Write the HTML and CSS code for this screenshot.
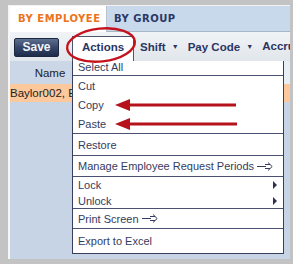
FILE: index.html
```html
<!DOCTYPE html>
<html>
<head>
<meta charset="utf-8">
<link rel="stylesheet" href="styles.css">
</head>
<body>
<div class="frame">
  <div class="tabs">
    <div class="tab tab-active">BY EMPLOYEE</div>
    <div class="tab tab-idle">BY GROUP</div>
  </div>
  <div class="toolbar">
    <div class="btn-save">Save</div>
    <div class="tb-actions">Actions</div>
    <div class="tb-item">Shift <span class="caret">▼</span></div>
    <div class="tb-item">Pay Code <span class="caret">▼</span></div>
    <div class="tb-item">Accruals</div>
  </div>
  <div class="grid">
    <div class="grid-head">
      <div class="col-name">Name</div>
      <div class="col-rest"></div>
    </div>
    <div class="grid-row">
      <div class="col-name cell">Baylor002, Ed</div>
    </div>
  </div>
  <div class="menu">
    <div class="grp"><div class="it h14 top">Select All</div></div>
    <div class="grp">
      <div class="it h19">Cut</div>
      <div class="it h19">Copy</div>
      <div class="it h19">Paste</div>
    </div>
    <div class="grp"><div class="it h21">Restore</div></div>
    <div class="grp"><div class="it h20">Manage Employee Request Periods <svg class="dbl" width="16" height="9" viewBox="0 0 16 9"><path d="M0 4.5H9M8 2.5H13M8 6.5H13M11 0.5L15.2 4.5L11 8.5" fill="none" stroke="#363b5e" stroke-width="1"/></svg></div></div>
    <div class="grp">
      <div class="it h16 sub">Lock <span class="tri"></span></div>
      <div class="it h15 sub">Unlock <span class="tri"></span></div>
    </div>
    <div class="grp"><div class="it h19">Print Screen <svg class="dbl" width="16" height="9" viewBox="0 0 16 9"><path d="M0 4.5H9M8 2.5H13M8 6.5H13M11 0.5L15.2 4.5L11 8.5" fill="none" stroke="#363b5e" stroke-width="1"/></svg></div></div>
    <div class="grp last"><div class="it h23">Export to Excel</div></div>
  </div>
</div>
<svg class="marks" width="293" height="264" viewBox="0 0 293 264">
  <ellipse cx="101" cy="45" rx="34" ry="16.5" transform="rotate(-6 101 45)" fill="none" stroke="#c4131d" stroke-width="2.4"/>
  <polygon points="115,105 130,99 130,111" fill="#b5121b"/>
  <rect x="128" y="103.5" width="108" height="3" fill="#b5121b"/>
  <polygon points="115,124 130,118 130,130" fill="#b5121b"/>
  <rect x="128" y="122.5" width="109" height="3" fill="#b5121b"/>
</svg>
</body>
</html>
```
FILE: styles.css
```css
html, body {
  margin: 0;
  padding: 0;
}
body {
  background: #c3c3c3;
  width: 293px;
  height: 264px;
  position: relative;
  overflow: hidden;
  font-family: "Liberation Sans", Arial, sans-serif;
}
.frame {
  position: absolute;
  left: 8px;
  top: 5px;
  width: 280px;
  height: 253px;
  border-left: 2px solid #f6f6f6;
  border-top: 1px solid #f2f2f2;
  background: #c6d4e6;
  display: flex;
  flex-direction: column;
}
.tabs {
  display: flex;
  height: 26px;
  flex: none;
}
.tab {
  font-family: "DejaVu Sans", Verdana, sans-serif;
  font-weight: bold;
  font-size: 10px;
  letter-spacing: 0.5px;
  line-height: 26px;
  box-sizing: border-box;
}
.tab-active {
  width: 97px;
  background: #fff;
  color: #ec7320;
  padding-left: 8px;
  border-right: 1px solid #b9c3d0;
}
.tab-idle {
  flex: 1;
  background: #c7d9eb;
  color: #2b3766;
  padding-left: 7px;
  border-bottom: 1px solid #a9b6c6;
}
.toolbar {
  flex: none;
  height: 28px;
  display: flex;
  align-items: flex-start;
  background: linear-gradient(#f1f3f6, #e1e6ec);
  overflow: hidden;
  padding-bottom: 1px;
  margin-bottom: -1px;
  white-space: nowrap;
  position: relative;
  z-index: 3;
}
.toolbar > div {
  flex: none;
}
.btn-save {
  margin: 6px 0 0 4px;
  width: 45px;
  height: 19px;
  box-sizing: border-box;
  border: 1px solid #1b2640;
  border-radius: 2px;
  background: linear-gradient(#5e6f8f, #34466a 50%, #1f2c4a);
  color: #f4f6fa;
  font-weight: bold;
  font-size: 12px;
  line-height: 17px;
  text-align: center;
}
.tb-actions {
  margin: 4px 0 0 13px;
  width: 62px;
  height: 25px;
  box-sizing: border-box;
  border: 1px solid #4e556e;
  border-bottom: none;
  background: #fff;
  color: #2a3562;
  font-weight: bold;
  font-size: 11.5px;
  line-height: 21px;
  text-align: center;
}
.tb-item {
  margin: 4px 0 0 6px;
  color: #2a3562;
  font-weight: bold;
  font-size: 11.5px;
  line-height: 21px;
  margin-right: 3px;
}
.caret {
  font-size: 7px;
  vertical-align: 2px;
  margin-left: 3px;
}
.grid {
  flex: 1;
  display: flex;
  flex-direction: column;
}
.grid-head {
  display: flex;
  height: 24px;
}
.col-name {
  width: 80px;
  text-align: center;
  font-size: 11.5px;
  line-height: 26px;
  color: #222;
  background: #cbd7e7;
}
.col-rest {
  flex: 1;
  background: #e8eef6;
}
.grid-row {
  height: 18px;
  background: #fcc89c;
}
.cell {
  text-align: left;
  line-height: 18px;
  background: transparent;
  white-space: nowrap;
  overflow: hidden;
}
.menu {
  position: absolute;
  left: 62px;
  top: 54px;
  width: 212px;
  height: 194px;
  box-sizing: border-box;
  border: 1px solid #383e5e;
  background: #fff;
  z-index: 2;
  color: #363b5e;
  font-size: 11px;
  white-space: nowrap;
}
.grp {
  border-bottom: 1px solid #4a5070;
}
.grp.last {
  border-bottom: none;
}
.it {
  padding-left: 5px;
  padding-right: 6px;
  display: flex;
  align-items: center;
  gap: 3px;
}
.it.top {
  align-items: flex-start;
  line-height: 12px;
}
.h14 { height: 14px; }
.h15 { height: 15px; }
.h16 { height: 16px; }
.h19 { height: 19px; }
.h20 { height: 20px; }
.h21 { height: 21px; }
.h23 { height: 23px; }
.sub {
  justify-content: space-between;
}
.tri {
  width: 0;
  height: 0;
  border-top: 4px solid transparent;
  border-bottom: 4px solid transparent;
  border-left: 4px solid #2c3152;
}
.dbl {
  display: block;
}
.marks {
  position: absolute;
  left: 0;
  top: 0;
  z-index: 10;
  pointer-events: none;
}
```
